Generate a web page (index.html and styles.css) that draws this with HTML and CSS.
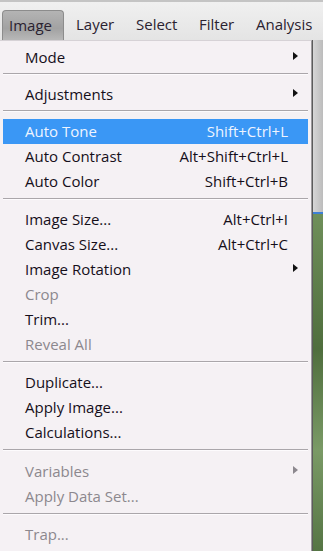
FILE: index.html
```html
<!DOCTYPE html>
<html lang="en">
<head>
  <meta charset="UTF-8">
  <title>Image menu</title>
  <link rel="stylesheet" href="styles.css">
</head>
<body>
  <div class="menubar">
    <div class="tab active">Image</div>
    <div class="tab">Layer</div>
    <div class="tab">Select</div>
    <div class="tab">Filter</div>
    <div class="tab">Analysis</div>
  </div>
  <div class="main">
    <div class="menu">
      <div class="item sub">Mode</div>
      <div class="sep"></div>
      <div class="item sub">Adjustments</div>
      <div class="sep"></div>
      <div class="item hl">Auto Tone<span class="key">Shift+Ctrl+L</span></div>
      <div class="item">Auto Contrast<span class="key">Alt+Shift+Ctrl+L</span></div>
      <div class="item">Auto Color<span class="key">Shift+Ctrl+B</span></div>
      <div class="sep mid"></div>
      <div class="item">Image Size...<span class="key">Alt+Ctrl+I</span></div>
      <div class="item">Canvas Size...<span class="key">Alt+Ctrl+C</span></div>
      <div class="item sub">Image Rotation</div>
      <div class="item off">Crop</div>
      <div class="item">Trim...</div>
      <div class="item off">Reveal All</div>
      <div class="sep mid"></div>
      <div class="item">Duplicate...</div>
      <div class="item">Apply Image...</div>
      <div class="item">Calculations...</div>
      <div class="sep wide"></div>
      <div class="item off sub">Variables</div>
      <div class="item off">Apply Data Set...</div>
      <div class="sep mid"></div>
      <div class="item off">Trap...</div>
    </div>
    <div class="side">
      <div class="side-top"></div>
      <div class="side-img"></div>
    </div>
  </div>
</body>
</html>
```

FILE: styles.css
```css
body {
  margin: 0;
  width: 323px;
  height: 551px;
  overflow: hidden;
  font-family: 'Open Sans', 'Noto Sans', Arial, sans-serif;
  font-size: 15px;
  color: #150f1a;
  background: #e6e6e6;
}
.menubar {
  height: 40px;
  box-sizing: border-box;
  border-top: 2px solid #c4c4c4;
  background: linear-gradient(#f0f0f0, #e4e4e4);
  display: flex;
  align-items: flex-end;
  padding-left: 2px;
}
.tab {
  height: 30px;
  line-height: 28px;
  padding: 0 0 0 12px;
  width: 48px;
  color: #2a2230;
}
.tab:nth-child(2) { width: 48px; }
.tab:nth-child(3) { width: 51px; }
.tab:nth-child(4) { width: 45px; }
.tab.active {
  width: 54px;
  padding-left: 6px;
  background: linear-gradient(#b4b4b4, #a2a2a2 60%, #b8b8b8);
  border: 1px solid #8c8c8c;
  border-bottom: none;
  border-radius: 4px 4px 0 0;
  height: 29px;
}
.main {
  display: flex;
  height: 511px;
}
.menu {
  width: 312px;
  background: #f5f1f4;
  border-top: 1px solid #d6d2d6;
  border-right: 1px solid #9c9a9c;
  padding: 4px 3px 0 3px;
  box-sizing: border-box;
}
.item {
  height: 25px;
  line-height: 25px;
  padding: 0 20px 0 22px;
  display: flex;
  justify-content: space-between;
  position: relative;
}
.item.hl {
  background: #3a97f5;
  color: #eef4ff;
}
.item.off {
  color: #8c888e;
}
.key {
  text-align: right;
}
.sub::after {
  content: '';
  position: absolute;
  right: 10px;
  top: 7px;
  border-left: 5px solid #111;
  border-top: 4px solid transparent;
  border-bottom: 4px solid transparent;
}
.sub.off::after {
  border-left-color: #8c888e;
}
.sep {
  height: 0;
  margin: 3px 0 7px 0;
  border-top: 1px solid #aaa6aa;
  border-bottom: 1px solid #fdfbfd;
}
.sep.mid {
  margin: 4px 0 7px 0;
}
.sep.wide {
  margin: 4px 0 8px 0;
}
.side {
  flex: 1;
  display: flex;
  flex-direction: column;
  border-left: 1px solid #5c5c5c;
}
.side-top {
  height: 172px;
  background: linear-gradient(90deg, #d6d6d6, #bcbcbc);
  border-bottom: 2px solid #3d7fd6;
}
.side-img {
  flex: 1;
  background: linear-gradient(#6f8f5a, #4f6e3d 40%, #7a9a66 70%, #557544);
}
```
